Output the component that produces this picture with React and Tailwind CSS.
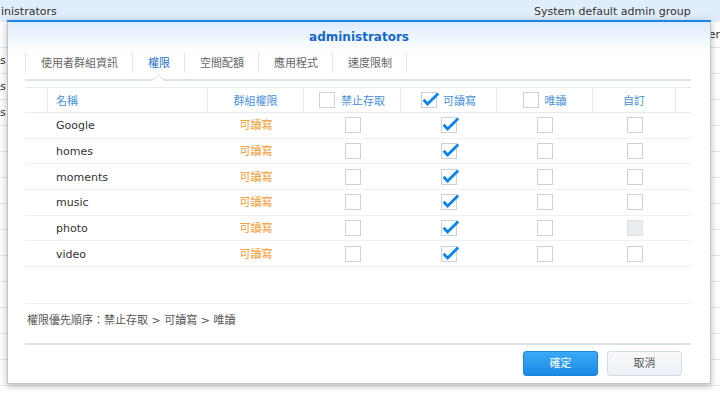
import React from "react";

// ── Data ───────────────────────────────────────────────────────────────────────

const SHARES = [
  { name: "Google" },
  { name: "homes" },
  { name: "moments" },
  { name: "music" },
  { name: "photo", customDisabled: true },
  { name: "video" },
];

const TABS = ["使用者群組資訊", "權限", "空間配額", "應用程式", "速度限制"];

const COLS = "grid grid-cols-[23px_160px_96px_97px_96px_96px_83px_15px]";

// ── Checkbox ───────────────────────────────────────────────────────────────────

function Box({ checked, disabled }) {
  return (
    <span
      className={
        "relative inline-block w-4 h-4 border shrink-0 " +
        (disabled ? "border-[#dde2e8] bg-[#e9edf1]" : "border-[#c9d1da] bg-white")
      }
    >
      {checked && (
        <svg
          className="absolute left-[-1px] top-[-1px] overflow-visible"
          width="16"
          height="16"
          viewBox="0 0 16 16"
        >
          <path d="M2.6 7.8 L6.6 12 L17.2 1.6" stroke="#0a84e8" strokeWidth="2.8" fill="none" />
        </svg>
      )}
    </span>
  );
}

// ── Background list (behind the dialog) ───────────────────────────────────────

function BackgroundList() {
  return (
    <div className="flex flex-col">
      <div className="h-[22px] flex items-center bg-[#e0edfa] text-[#333]">
        <span className="w-[534px] pl-[1px]">inistrators</span>
        <span>System default admin group</span>
      </div>
      <div className="h-[26px] flex items-center border-b border-[#e6e6e6] text-[#333]">
        <span className="w-[534px]" />
        <span className="ml-[165px] whitespace-nowrap">user</span>
      </div>
      {["s", "s", "s", "", "", "", "", "", "", "", "", "", ""].map((t, i) => (
        <div key={i} className="h-[26px] flex items-center border-b border-[#e6e6e6] text-[#333]">
          <span>{t}</span>
        </div>
      ))}
    </div>
  );
}

// ── Dialog ─────────────────────────────────────────────────────────────────────

function Tabs() {
  return (
    <div className="flex flex-col">
      <div className="flex h-[21px] items-center">
        {TABS.map((t, i) => (
          <div
            key={t}
            className={
              "h-full flex items-center pt-[1px] pl-[15px] pr-[14px] border-l border-[#e4e7ea] " +
              (i === TABS.length - 1 ? "border-r " : "") +
              (i === 1 ? "text-[#1f74cf]" : "text-[#666]")
            }
          >
            {t}
          </div>
        ))}
      </div>
      <div className="relative mt-[6px] h-[2px] bg-[#dfe2e6]">
        <svg className="absolute left-[128px] top-[-5px]" width="11" height="7" viewBox="0 0 11 7">
          <path d="M0 6 L5.5 0.8 L11 6 L11 7 L0 7 Z" fill="white" />
          <path d="M0 6 L5.5 0.8 L11 6" stroke="#d3d7dc" strokeWidth="1" fill="none" />
        </svg>
      </div>
    </div>
  );
}

function PermTable() {
  return (
    <div className="mt-[6px] flex flex-col">
      {/* Header */}
      <div className={COLS + " h-[26px] border-t border-b border-[#e5ebf1] text-[#4a90d9]"}>
        <div className="border-r border-[#e5ebf1]" />
        <div className="border-r border-[#e5ebf1] flex items-center pl-[8px] pt-[2px]">名稱</div>
        <div className="border-r border-[#e5ebf1] flex items-center justify-center pt-[2px]">群組權限</div>
        <div className="border-r border-[#e5ebf1] flex items-center justify-center gap-[6px]">
          <Box />
          <span className="pt-[2px]">禁止存取</span>
        </div>
        <div className="border-r border-[#e5ebf1] flex items-center justify-center gap-[6px]">
          <Box checked />
          <span className="pt-[2px]">可讀寫</span>
        </div>
        <div className="border-r border-[#e5ebf1] flex items-center justify-center gap-[6px]">
          <Box />
          <span className="pt-[2px]">唯讀</span>
        </div>
        <div className="border-r border-[#e5ebf1] flex items-center justify-center pt-[2px]">自訂</div>
        <div />
      </div>

      {/* Rows */}
      {SHARES.map((s) => (
        <div key={s.name} className={COLS + " h-[25.7px] border-b border-[#edf1f5]"}>
          <div />
          <div className="flex items-center pl-[8px] pt-[1px] text-[#333]">{s.name}</div>
          <div className="flex items-center justify-center pt-[1px] text-[#f39a2f]">可讀寫</div>
          <div className="flex items-center justify-center">
            <Box />
          </div>
          <div className="flex items-center justify-center">
            <Box checked />
          </div>
          <div className="flex items-center justify-center">
            <Box />
          </div>
          <div className="flex items-center justify-center">
            <Box disabled={s.customDisabled} />
          </div>
          <div />
        </div>
      ))}
    </div>
  );
}

function Dialog() {
  return (
    <div className="absolute left-[7px] top-[20px] w-[704px] h-[364px] bg-white border-x border-b border-[#c4c4c4] shadow-[0_2px_7px_rgba(0,0,0,0.28)] flex flex-col">
      <div className="h-[2px] bg-[#1b86e6] -mx-[1px]" />
      <div className="h-[30px] flex items-center justify-center text-[12px] font-bold text-[#1567c9] bg-gradient-to-b from-[#ddecfb] to-white">
        administrators
      </div>

      <div className="pl-[17px] pr-[19px] flex flex-col">
        <Tabs />
        <PermTable />

        <div className="h-[37px] border-b border-[#eef1f4]" />

        <div className="h-[39px] pt-[8px] text-[#555]">
          <div className="h-4 flex items-center pl-[2px]">權限優先順序：禁止存取 &gt; 可讀寫 &gt; 唯讀</div>
        </div>

        <div className="h-[2px] bg-[#dcdfe3]" />

        <div className="flex justify-end gap-[9px] pr-[9px] mt-[6px]">
          <button className="w-[75px] h-[25px] rounded-[3px] border border-[#1a84dc] bg-gradient-to-b from-[#3aa9f7] to-[#1a8ae4] text-white">
            確定
          </button>
          <button className="w-[75px] h-[25px] rounded-[3px] border border-[#d3dbe3] bg-gradient-to-b from-[#f7f9fb] to-[#eef2f6] text-[#555]">
            取消
          </button>
        </div>
      </div>
    </div>
  );
}

// ── Page ───────────────────────────────────────────────────────────────────────

export default function App() {
  return (
    <div
      className="relative w-[720px] h-[398px] overflow-hidden bg-white text-[11px] leading-none"
      style={{ fontFamily: '"DejaVu Sans", "Noto Sans CJK TC", sans-serif' }}
    >
      <BackgroundList />
      <Dialog />
    </div>
  );
}
